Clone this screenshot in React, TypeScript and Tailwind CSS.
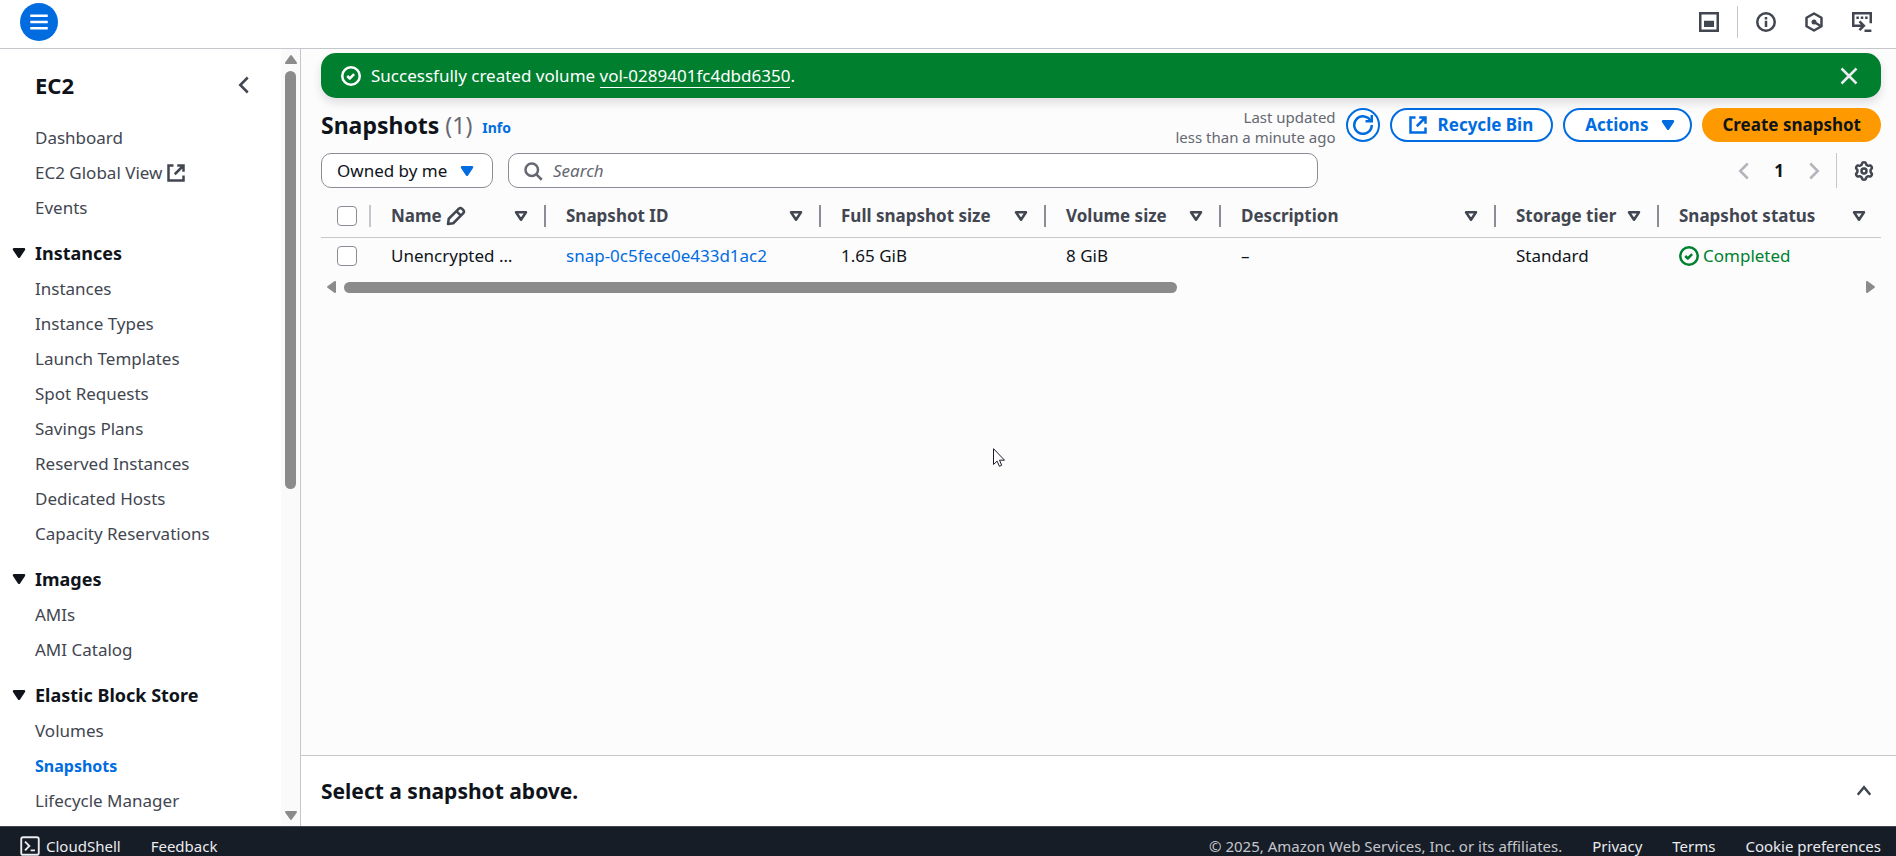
import type { ReactNode } from 'react';

type IconProps = { children: ReactNode; className?: string; strokeWidth?: number };

function Icon({ children, className = 'size-5', strokeWidth = 2 }: IconProps) {
  return (
    <svg
      viewBox="0 0 16 16"
      fill="none"
      stroke="currentColor"
      strokeWidth={strokeWidth}
      strokeLinejoin="round"
      aria-hidden="true"
      className={`shrink-0 ${className}`}
    >
      {children}
    </svg>
  );
}

const ExternalIcon = () => (
  <Icon>
    <path d="M9 2h5v5M7 9l7-7M14 10v4H2V2h4" strokeLinejoin="miter" />
  </Icon>
);

const CheckIcon = () => (
  <Icon>
    <circle cx="8" cy="8" r="7" />
    <path d="m5 8 2 2 3.5-3.5" />
  </Icon>
);

const CaretIcon = () => (
  <Icon>
    <path d="M4 5h8l-4 6-4-6z" fill="currentColor" />
  </Icon>
);

const SortIcon = () => (
  <Icon>
    <path d="M4 5h8l-4 6-4-6z" />
  </Icon>
);

const PencilIcon = () => (
  <Icon>
    <path d="m1.6 14.4.6-4.200 7.900-7.900a2 2 0 0 1 2.800 0l.8.8a2 2 0 0 1 0 2.800l-7.900 7.900zM8.500 4.300l3.200 3.200" />
  </Icon>
);

function gearPath() {
  const points: string[] = [];
  for (let i = 0; i <= 72; i++) {
    const angle = (i / 72) * Math.PI * 2;
    const radius = 6.1 + 0.9 * Math.tanh(1.8 * Math.cos(6 * angle));
    const x = 8 + radius * Math.sin(angle);
    const y = 8 - radius * Math.cos(angle);
    points.push(`${i === 0 ? 'M' : 'L'}${x.toFixed(2)} ${y.toFixed(2)}`);
  }
  return `${points.join('')}Z`;
}

const sections = [
  {
    title: 'Instances',
    items: [
      'Instances',
      'Instance Types',
      'Launch Templates',
      'Spot Requests',
      'Savings Plans',
      'Reserved Instances',
      'Dedicated Hosts',
      'Capacity Reservations',
    ],
  },
  { title: 'Images', items: ['AMIs', 'AMI Catalog'] },
  { title: 'Elastic Block Store', items: ['Volumes', 'Snapshots', 'Lifecycle Manager'] },
];

function NavLink({ label, external = false }: { label: string; external?: boolean }) {
  const active = label === 'Snapshots';
  return (
    <li className="flex h-[35px] items-center">
      <a
        href="#"
        aria-current={active ? 'page' : undefined}
        className={`flex items-center gap-1 whitespace-nowrap ${
          active ? 'text-base font-bold text-[#006ce0]' : 'text-[#424650]'
        }`}
      >
        {label}
        {external && <ExternalIcon />}
      </a>
    </li>
  );
}

function Sidebar() {
  return (
    <aside className="flex w-[301px] shrink-0 border-r border-[#c6c6cd] bg-white">
      <nav aria-label="EC2" className="min-w-0 flex-1 overflow-hidden pl-[35px]">
        <div className="flex h-[71px] items-center justify-between pr-[27px]">
          <h2 className="text-[22px] font-bold">EC2</h2>
          <button type="button" aria-label="Close navigation" className="text-[#424650]">
            <Icon>
              <path d="M11 2 5 8l6 6" strokeLinejoin="miter" />
            </Icon>
          </button>
        </div>
        <ul>
          <NavLink label="Dashboard" />
          <NavLink label="EC2 Global View" external />
          <NavLink label="Events" />
        </ul>
        {sections.map((section) => (
          <section key={section.title}>
            <h3 className="-ml-[26px] pt-2.5">
              <button type="button" className="flex h-9 items-center gap-1.5 text-lg font-bold">
                <CaretIcon />
                {section.title}
              </button>
            </h3>
            <ul>
              {section.items.map((item) => (
                <NavLink key={item} label={item} />
              ))}
            </ul>
          </section>
        ))}
      </nav>
      <div className="flex w-[19px] flex-col items-center bg-[#fafafa] py-1.5 text-[#8b8b8b]" aria-hidden="true">
        <svg viewBox="0 0 12 9" className="h-[9px] w-3" fill="currentColor">
          <path d="M5 .8a1.2 1.2 0 0 1 2 0l4.7 6.5A1 1 0 0 1 11 9H1a1 1 0 0 1-.7-1.7z" />
        </svg>
        <div className="flex w-full flex-1 flex-col items-center py-[7px]">
          <div className="h-[57%] w-[11px] rounded-full bg-[#8b8b8b]" />
        </div>
        <svg viewBox="0 0 12 9" className="h-[9px] w-3" fill="currentColor">
          <path d="M5 8.2a1.2 1.2 0 0 0 2 0l4.7-6.5A1 1 0 0 0 11 0H1a1 1 0 0 0-.7 1.7z" />
        </svg>
      </div>
    </aside>
  );
}

function TopBar() {
  return (
    <header className="flex h-[49px] shrink-0 items-start justify-between border-b border-[#c6c6cd] bg-white pt-[3px] pr-6 pl-5">
      <button
        type="button"
        aria-label="Open menu"
        className="flex size-[38px] items-center justify-center rounded-full bg-[#006ce0] text-white"
      >
        <Icon>
          <path d="M1 3h14M1 8h14M1 13h14" />
        </Icon>
      </button>
      <div className="flex h-[38px] items-center text-[#424650]">
        <button type="button" aria-label="Split panel">
          <Icon>
            <path d="M1 1h14v14H1z" strokeLinejoin="miter" />
            <path d="M4 7h8v5H4z" fill="currentColor" stroke="none" />
          </Icon>
        </button>
        <span className="mx-[18px] h-8 w-px bg-[#c6c6cd]" />
        <button type="button" aria-label="Info">
          <Icon>
            <circle cx="8" cy="8" r="7" />
            <path d="M8 7v5M8 4v2" />
          </Icon>
        </button>
        <button type="button" aria-label="Amazon Q" className="ml-7">
          <Icon>
            <path d="m8 1.200 6 3.400v6.800l-6 3.400-6-3.400V4.600z" />
            <circle cx="8" cy="8" r="2" fill="currentColor" stroke="none" />
            <path d="m8 8 5 3" />
          </Icon>
        </button>
        <button type="button" aria-label="Tutorials" className="ml-7">
          <Icon>
            <path d="M4 11H1V1h14v8" strokeLinejoin="miter" />
            <path d="M3.500 4.500h2M7 4.500h2M10.500 4.500h2M10 15h5.500" />
            <path d="M4 11h5M6 7.500 9.500 11 6 14.500" strokeLinejoin="miter" />
          </Icon>
        </button>
      </div>
    </header>
  );
}

const outlineButton =
  'flex h-[34px] shrink-0 items-center rounded-full border-2 border-[#006ce0] bg-white font-bold text-[#006ce0]';

const columns = [
  { label: 'Name', width: 'w-[175px]' },
  { label: 'Snapshot ID', width: 'w-[275px]' },
  { label: 'Full snapshot size', width: 'w-[225px]' },
  { label: 'Volume size', width: 'w-[175px]' },
  { label: 'Description', width: 'w-[275px]' },
  { label: 'Storage tier', width: 'w-[163px]' },
  { label: 'Snapshot status', width: '' },
];

function Checkbox({ label }: { label: string }) {
  return (
    <input
      type="checkbox"
      aria-label={label}
      className="block size-5 appearance-none rounded-[4px] border border-[#8c8c94] bg-white"
    />
  );
}

function SnapshotTable() {
  return (
    <table className="mt-2 w-full table-fixed text-left">
      <thead>
        <tr className="h-[41px] border-b border-[#c6c6cd] text-[#424650]">
          <th className="w-[50px] pl-4">
            <div className="flex h-[22px] items-center border-r-2 border-[#c6c6cd]">
              <Checkbox label="Select all" />
            </div>
          </th>
          {columns.map((column, index) => (
            <th key={column.label} className={`pl-5 ${column.width}`}>
              <div
                className={`flex h-[22px] items-center justify-between ${
                  index < columns.length - 1 ? 'border-r-2 border-[#8c8c94] pr-[13px]' : 'pr-3'
                }`}
              >
                <span className="flex items-center gap-1 whitespace-nowrap">
                  {column.label}
                  {index === 0 && <PencilIcon />}
                </span>
                <button type="button" aria-label={`Sort by ${column.label}`}>
                  <SortIcon />
                </button>
              </div>
            </th>
          ))}
        </tr>
      </thead>
      <tbody>
        <tr className="h-[38px] whitespace-nowrap">
          <td className="pl-4">
            <Checkbox label="Select snap-0c5fece0e433d1ac2" />
          </td>
          <td className="pl-5">Unencrypted …</td>
          <td className="pl-5">
            <a href="#" className="text-[#006ce0]">
              snap-0c5fece0e433d1ac2
            </a>
          </td>
          <td className="pl-5">1.65 GiB</td>
          <td className="pl-5">8 GiB</td>
          <td className="pl-5">–</td>
          <td className="pl-5">Standard</td>
          <td className="pl-5">
            <span className="flex items-center gap-1 text-[#00802f]">
              <CheckIcon />
              Completed
            </span>
          </td>
        </tr>
      </tbody>
    </table>
  );
}

function Snapshots() {
  return (
    <section className="flex-1 pt-1 pr-[15px] pl-5">
      <div
        role="status"
        className="flex h-[45px] items-center gap-2.5 rounded-[15px] bg-[#00802f] pr-[22px] pl-5 text-white shadow-[0_5px_10px_rgba(0,7,22,0.12)]"
      >
        <CheckIcon />
        <p className="flex-1">
          Successfully created volume{' '}
          <a href="#" className="border-b border-white">
            vol-0289401fc4dbd6350
          </a>
          .
        </p>
        <button type="button" aria-label="Dismiss" className="text-[#ebebf0]">
          <Icon>
            <path d="m2 2 12 12M14 2 2 14" />
          </Icon>
        </button>
      </div>

      <div className="mt-2.5 flex h-[34px] items-center gap-2.5">
        <h1 className="text-[23px] font-bold">
          Snapshots <span className="font-normal text-[#656871]">(1)</span>
        </h1>
        <a href="#" className="flex-1 pt-1.5 text-sm font-bold text-[#006ce0]">
          Info
        </a>
        <p className="pt-1 text-right text-[15px] leading-5 text-[#656871]">
          Last updated
          <br />
          less than a minute ago
        </p>
        <button type="button" aria-label="Refresh" className={`${outlineButton} w-[34px] justify-center`}>
          <Icon>
            <path d="M10 5h5V0" strokeLinejoin="miter" />
            <path d="M15 8a7 7 0 1 1-.7-3" />
          </Icon>
        </button>
        <button type="button" className={`${outlineButton} gap-2.5 pr-[18px] pl-4`}>
          <ExternalIcon />
          Recycle Bin
        </button>
        <button type="button" className={`${outlineButton} gap-2.5 pr-3 pl-5`}>
          Actions
          <CaretIcon />
        </button>
        <button type="button" className="h-[34px] shrink-0 rounded-full bg-[#ff9900] px-5 font-bold">
          Create snapshot
        </button>
      </div>

      <div className="mt-[11px] flex h-[35px] items-center">
        <div className="relative h-full w-[172px] shrink-0">
          <select
            aria-label="Owner filter"
            className="h-full w-full appearance-none rounded-[10px] border border-[#8c8c94] bg-white px-[15px]"
          >
            <option>Owned by me</option>
          </select>
          <span className="pointer-events-none absolute inset-y-0 right-4 flex items-center text-[#006ce0]">
            <CaretIcon />
          </span>
        </div>
        <label className="ml-[15px] flex h-full w-[810px] items-center gap-2.5 rounded-[10px] border border-[#8c8c94] bg-white px-3.5 text-[#656871]">
          <Icon>
            <circle cx="7" cy="7" r="5" />
            <path d="m15 15-4.500-4.500" />
          </Icon>
          <input
            type="search"
            aria-label="Search"
            placeholder="Search"
            className="min-w-0 flex-1 outline-none placeholder:text-[#656871] placeholder:italic"
          />
        </label>
        <div className="ml-auto flex h-full items-center pr-[7px] text-[#b4b4bb]">
          <button type="button" aria-label="Previous page">
            <Icon>
              <path d="M11 2 5 8l6 6" strokeLinejoin="miter" />
            </Icon>
          </button>
          <button type="button" className="w-[50px] text-center font-bold text-[#0f141a]">
            1
          </button>
          <button type="button" aria-label="Next page">
            <Icon>
              <path d="m5 2 6 6-6 6" strokeLinejoin="miter" />
            </Icon>
          </button>
          <span className="mr-[17px] ml-3 h-full w-px bg-[#c6c6cd]" />
          <button type="button" aria-label="Preferences" className="text-[#424650]">
            <Icon>
              <path d={gearPath()} />
              <circle cx="8" cy="8" r="2" />
            </Icon>
          </button>
        </div>
      </div>

      <SnapshotTable />

      <div className="mt-1.5 flex items-center gap-2 px-1.5 text-[#8b8b8b]" aria-hidden="true">
        <svg viewBox="0 0 9 12" className="h-3 w-[9px]" fill="currentColor">
          <path d="M.8 5a1.2 1.2 0 0 0 0 2l6.5 4.7A1 1 0 0 0 9 11V1A1 1 0 0 0 7.3.3z" />
        </svg>
        <div className="flex-1">
          <div className="h-[11px] w-[55%] rounded-full bg-[#8b8b8b]" />
        </div>
        <svg viewBox="0 0 9 12" className="h-3 w-[9px]" fill="currentColor">
          <path d="M8.2 5a1.2 1.2 0 0 1 0 2l-6.5 4.7A1 1 0 0 1 0 11V1A1 1 0 0 1 1.7.3z" />
        </svg>
      </div>
    </section>
  );
}

function Footer() {
  return (
    <footer className="flex h-[30px] shrink-0 items-start gap-[30px] overflow-hidden border-t border-[#424650] bg-[#161d26] pt-[7px] pr-[15px] pl-5 text-[15px] leading-6 whitespace-nowrap text-[#ebebf0]">
      <a href="#" className="flex items-center gap-1.5">
        <Icon strokeWidth={1.5}>
          <rect x="1" y="1" width="14" height="14" rx="1.5" />
          <path d="m4 4.500 3.500 3.500L4 11.500M8.500 11.500H12" strokeLinejoin="miter" />
        </Icon>
        CloudShell
      </a>
      <a href="#">Feedback</a>
      <span className="ml-auto text-[#c6c6cd]">© 2025, Amazon Web Services, Inc. or its affiliates.</span>
      <a href="#">Privacy</a>
      <a href="#">Terms</a>
      <a href="#">Cookie preferences</a>
    </footer>
  );
}

export default function App() {
  return (
    <div className="relative flex h-screen flex-col overflow-hidden bg-white font-['Noto_Sans','Open_Sans',sans-serif] text-[17px] leading-6 text-[#0f141a]">
      <TopBar />
      <div className="flex min-h-0 flex-1">
        <Sidebar />
        <main className="flex min-w-0 flex-1 flex-col bg-[#fcfcfd]">
          <Snapshots />
          <section className="flex h-[71px] shrink-0 items-center justify-between border-t border-[#c6c6cd] bg-white pr-[22px] pl-5">
            <h2 className="text-[21px] font-bold">Select a snapshot above.</h2>
            <button type="button" aria-label="Open details" className="text-[#424650]">
              <Icon>
                <path d="m3 11 5-6 5 6" strokeLinejoin="miter" />
              </Icon>
            </button>
          </section>
        </main>
      </div>
      <Footer />
      <svg
        viewBox="0 0 12 19"
        className="pointer-events-none absolute top-[448px] left-[993px] h-[19px] w-3"
        fill="#fff"
        stroke="#1b1b2b"
        aria-hidden="true"
      >
        <path d="M.5.7v15.8l3.6-3.4 2.3 5.2 2.3-1-2.2-5.1h5z" />
      </svg>
    </div>
  );
}
